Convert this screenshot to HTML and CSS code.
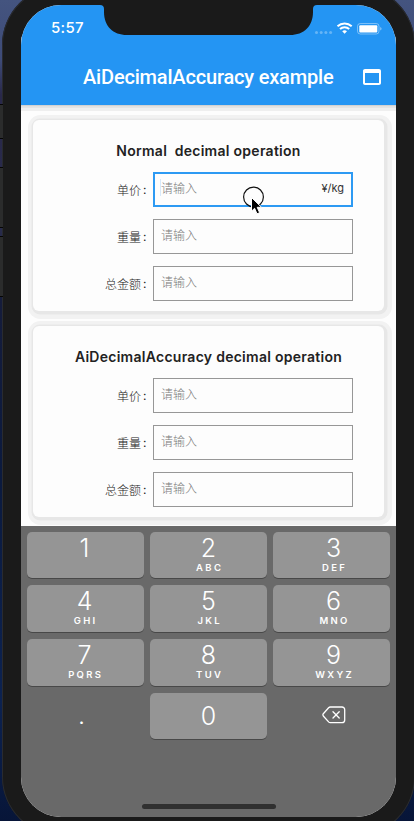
FILE: index.html
```html
<!DOCTYPE html>
<html lang="zh-CN">
<head>
<meta charset="utf-8">
<title>AiDecimalAccuracy example</title>
<link rel="stylesheet" href="styles.css">
</head>
<body>
<div class="side side-a"></div>
<div class="side side-b"></div>
<div class="side side-c"></div>
<div class="phone">
<div class="screen">
  <svg class="notch" width="217" height="30" viewBox="0 0 217 30"><path d="M0 0H217Q213 0 213 4V7C213 21 204 30 190 30H27C13 30 4 21 4 7V4Q4 0 0 0Z" fill="#1a1a1a"/></svg>
  <header class="appbar">
    <div class="status">
      <span class="time">5:57</span>
      <svg class="signals" width="68" height="14" viewBox="0 0 68 14">
        <g fill="#fff" fill-opacity=".3"><circle cx="2.5" cy="10.5" r="1.5"/><circle cx="7.2" cy="10.5" r="1.5"/><circle cx="11.9" cy="10.5" r="1.5"/><circle cx="16.6" cy="10.5" r="1.5"/></g>
        <path d="M23.5 4.3a10.5 10.5 0 0 1 14.2 0M26 7.1a6.8 6.8 0 0 1 9.200 0" fill="none" stroke="#fff" stroke-width="2"/>
        <path d="M30.600 11.700l-2.400-2.400a3.600 3.600 0 0 1 4.800 0z" fill="#fff"/>
        <rect x="43.500" y="1.500" width="21.500" height="10.500" rx="2.800" fill="none" stroke="#fff" stroke-opacity=".4"/>
        <rect x="45.300" y="3.200" width="18" height="7.200" rx="1" fill="#fff"/>
        <path d="M66.200 5v3.600q1.400-.5 1.400-1.800T66.200 5z" fill="#fff" fill-opacity=".45"/>
      </svg>
    </div>
    <div class="toolbar">
      <h1>AiDecimalAccuracy example</h1>
      <svg class="action" width="24" height="24" viewBox="0 0 24 24"><path d="M19 4H5c-1.110 0-2 .9-2 2v12c0 1.100.89 2 2 2h14c1.100 0 2-.9 2-2V6c0-1.100-.9-2-2-2zm0 14H5V8h14v10z" fill="#fff"/></svg>
    </div>
  </header>
  <main>
    <section class="card">
      <h2>Normal&nbsp; decimal operation</h2>
      <div class="row"><label>单价<span>:</span></label><div class="field active"><span class="hint">请输入</span><span class="unit">¥/kg</span>
        <svg class="pointer" width="24" height="30" viewBox="0 0 24 30"><circle cx="11.500" cy="11" r="9.900" fill="none" stroke="#111" stroke-width="1.200"/><path d="M9.500 11.500V25.200l3.100-2.900 2.400 5.500 2.600-1.100-2.400-5.400h4.300z" fill="#000" stroke="#fff" stroke-width="1"/></svg></div></div>
      <div class="row"><label>重量<span>:</span></label><div class="field"><span class="hint">请输入</span></div></div>
      <div class="row"><label>总金额<span>:</span></label><div class="field"><span class="hint">请输入</span></div></div>
    </section>
    <section class="card">
      <h2>AiDecimalAccuracy decimal operation</h2>
      <div class="row"><label>单价<span>:</span></label><div class="field"><span class="hint">请输入</span></div></div>
      <div class="row"><label>重量<span>:</span></label><div class="field"><span class="hint">请输入</span></div></div>
      <div class="row"><label>总金额<span>:</span></label><div class="field"><span class="hint">请输入</span></div></div>
    </section>
  </main>
  <div class="keyboard">
    <div class="keys">
      <div class="key"><b>1</b></div>
      <div class="key"><b>2</b><i>ABC</i></div>
      <div class="key"><b>3</b><i>DEF</i></div>
      <div class="key"><b>4</b><i>GHI</i></div>
      <div class="key"><b>5</b><i>JKL</i></div>
      <div class="key"><b>6</b><i>MNO</i></div>
      <div class="key"><b>7</b><i>PQRS</i></div>
      <div class="key"><b>8</b><i>TUV</i></div>
      <div class="key"><b>9</b><i>WXYZ</i></div>
      <div class="key plain dot"><b>.</b></div>
      <div class="key zero"><b>0</b></div>
      <div class="key plain"><svg width="24" height="18" viewBox="0 0 24 18" fill="none" stroke="#fff" stroke-width="1.300" stroke-linejoin="round" stroke-linecap="round"><path d="M8.300 1H20a2.700 2.700 0 0 1 2.700 2.700v10.200a2.700 2.700 0 0 1-2.700 2.700H8.300Q7.300 16.600 6.600 15.900L1.300 10Q.5 8.800 1.300 7.700L6.600 1.700Q7.300 1 8.300 1zM11 5.700l6.200 6.300M17.200 5.700L11 12"/></svg></div>
    </div>
    <div class="home"></div>
  </div>
</div>
</div>
</body>
</html>
```
FILE: styles.css
```css
* { box-sizing: border-box; }
body {
  margin: 0;
  width: 414px;
  height: 821px;
  overflow: hidden;
  position: relative;
  font-family: Inter, "Noto Sans CJK SC", sans-serif;
  background: linear-gradient(#44547f 0, #3e4b78 60px, #29284a 95px, #282b4b 230px, #151c3b 300px, #0b1a3e 480px, #0c2250 700px, #071538 821px);
}
.phone {
  margin: -14px 0 0 2px;
  width: 413px;
  height: 850px;
  padding: 19px;
  border-radius: 59px;
  background: #1a1a1a;
  box-shadow: inset 0 0 0 1px #292b30;
}
.side {
  position: absolute;
  left: -1px;
  width: 4px;
  background: #2b2c2c;
  border: 1px solid #050505;
  border-right: 0;
  z-index: 1;
}
.side-a { top: 104px; height: 35px; }
.side-b { top: 167px; height: 61px; }
.side-c { top: 236px; height: 61px; }
.screen {
  position: relative;
  width: 375px;
  height: 812px;
  border-radius: 40px;
  overflow: hidden;
  background: #fdfdfd;
  display: flex;
  flex-direction: column;
}
.notch { position: absolute; left: 79px; top: 0; z-index: 2; }
.appbar {
  flex: none;
  height: 100px;
  background: #2495f3;
  color: #fff;
  box-shadow: 0 1px 1px #d2d2d2, 0 3px 0 #e4e4e4, 0 6px 0 #efefef;
}
.status {
  height: 44px;
  padding: 1px 14px 0 30px;
  display: flex;
  align-items: center;
  justify-content: space-between;
}
.time { font-size: 15px; font-weight: 500; letter-spacing: .3px; }
.signals { margin-top: 2px; }
.toolbar {
  height: 56px;
  padding: 0 12px 0 62px;
  display: flex;
  align-items: center;
  justify-content: space-between;
}
h1 {
  margin: 0;
  font-family: Roboto, sans-serif;
  font-size: 20px;
  font-weight: 500;
  letter-spacing: -.18px;
  white-space: nowrap;
}
main {
  height: 421px;
  padding: 15px 12px 0;
}
.card {
  width: 351px;
  height: 191px;
  margin-bottom: 15px;
  padding-top: 21px;
  border-radius: 6px;
  background: #fdfdfd;
  box-shadow: 1px 1px 0 2.5px #e7e7e7, 1.5px 1.5px 0 6.5px #f2f2f2;
}
h2 {
  margin: 0 0 11px;
  height: 20px;
  line-height: 20px;
  font-size: 14px;
  font-weight: 600;
  letter-spacing: .27px;
  color: #222;
  text-align: center;
  white-space: nowrap;
}
.row {
  display: flex;
  height: 35px;
  margin-bottom: 12px;
}
label {
  width: 120px;
  flex: none;
  padding-top: 1px;
  line-height: 35px;
  text-align: right;
  font-size: 12px;
  font-weight: 300;
  color: #222;
}
label span {
  display: inline-block;
  width: 12px;
  padding-left: 2px;
  line-height: 1;
  text-align: left;
  font-weight: 400;
  vertical-align: 1px;
}
.field {
  position: relative;
  width: 200px;
  padding: 0 7px 4px;
  border: 1px solid #979797;
  display: flex;
  align-items: center;
  justify-content: space-between;
  font-size: 12px;
}
.field.active { border: 2px solid #2d9af3; padding: 0 7px 4px 6px; }
.hint { color: #7b7b7b; font-weight: 300; }
.unit { color: #333; font-size: 11px; }
.active .hint { box-shadow: -1px 0 0 #d7e9fa; }
.pointer { position: absolute; left: 87px; top: 12px; z-index: 1; }
.keyboard {
  flex: 1;
  padding: 6px;
  background: #696969;
  display: flex;
  flex-direction: column;
  justify-content: space-between;
  align-items: center;
}
.keys {
  width: 363px;
  display: grid;
  grid-template-columns: repeat(3, 117px);
  grid-template-rows: 46px 47px 47px 46px;
  gap: 7px 6px;
}
.key {
  border-radius: 5px;
  background: #959595;
  box-shadow: 0 1px 0 #484848;
  color: #fff;
  display: flex;
  flex-direction: column;
  align-items: center;
}
.key:nth-child(3n+1) { padding-right: 2px; }
.key:nth-child(3n) { padding-left: 4px; }
.key b { font-size: 25px; font-weight: 300; line-height: 26px; margin-top: 3px; }
.key i {
  font-size: 9.5px;
  font-weight: 600;
  font-style: normal;
  letter-spacing: 2.3px;
  margin: 1px -2.3px 0 0;
  line-height: 12px;
}
.plain { background: none; box-shadow: none; justify-content: center; }
.key.plain svg { margin-top: -2px; }
.zero { justify-content: center; }
.key.zero b { margin: 0; }
.key.dot { padding: 0 8px 5px 0; }
.home { width: 134px; height: 5px; border-radius: 3px; background: #303030; margin-bottom: 2px; }
```
